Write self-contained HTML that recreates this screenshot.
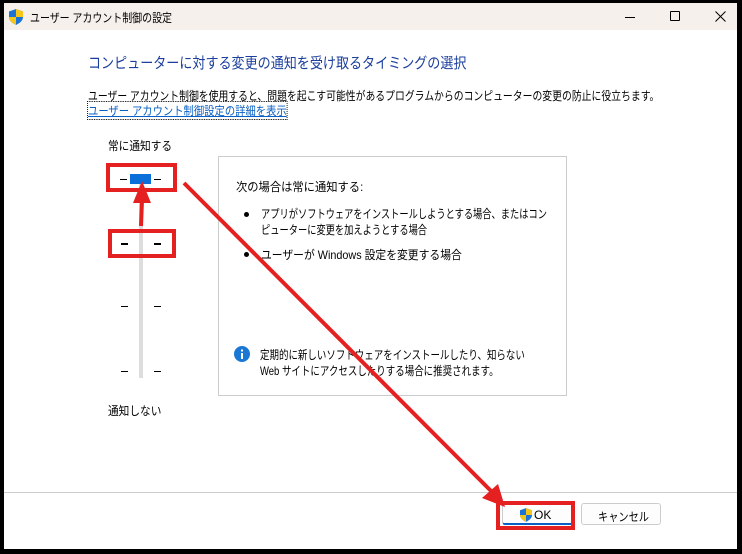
<!DOCTYPE html>
<html><head><meta charset="utf-8"><style>
*{margin:0;padding:0;box-sizing:border-box}
body{width:742px;height:554px;background:#000;position:relative;overflow:hidden;font-family:"Liberation Sans","Noto Sans CJK JP",sans-serif;color:#000}
.win{position:absolute;left:4px;top:3px;width:733px;height:546px;background:#fff;overflow:hidden}
.tb{position:absolute;left:0;top:0;width:733px;height:27px;background:#f5f0ec}
.t{position:absolute;font-size:12px;white-space:nowrap;transform-origin:0 0}
.tick{position:absolute;height:1px;width:7px;background:#000}
.tick.b{height:2px}
</style></head><body>
<div class="win">
<div class="tb">
<svg style="position:absolute;left:5px;top:6px" width="14" height="16" viewBox="0 0 14 16"><path d="M7 0L14 2.5V8C14 12 10 14.5 7 16C4 14.5 0 12 0 8V2.5Z" fill="#1a73d9"/><path d="M7 0V8H14V2.5Z" fill="#f5c518"/><path d="M0 8H7V16C4 14.5 0 12 0 8Z" fill="#f5c518"/></svg>
<div class="t" style="left:26px;top:6px;transform:scaleX(0.83)">ユーザー アカウント制御の設定</div>
<div style="position:absolute;left:621px;top:14px;width:10px;height:1px;background:#000"></div>
<div style="position:absolute;left:666px;top:8px;width:10px;height:10px;border:1px solid #000;border-radius:1px"></div>
<svg style="position:absolute;left:711px;top:8px" width="11" height="11"><path d="M0.5 0.5L10.5 10.5M10.5 0.5L0.5 10.5" stroke="#000" stroke-width="1"/></svg>
</div>
<div class="t" style="left:84px;top:49px;font-size:15px;color:#1b3e9c;transform:scaleX(0.87)">コンピューターに対する変更の通知を受け取るタイミングの選択</div>
<div class="t" style="left:84px;top:84px;transform:scaleX(0.82)">ユーザー アカウント制御を使用すると、問題を起こす可能性があるプログラムからのコンピューターの変更の防止に役立ちます。</div>
<div class="t" style="left:84px;top:99px;color:#0a5fc4;text-decoration:underline;outline:1px dotted #000;transform:scaleX(0.86)">ユーザー アカウント制御設定の詳細を表示</div>
<div class="t" style="left:104px;top:134px;transform:scaleX(0.89)">常に通知する</div>
<div class="t" style="left:104px;top:399px;transform:scaleX(0.89)">通知しない</div>
<div style="position:absolute;left:135px;top:180px;width:4px;height:195px;background:#ddd"></div>
<div style="position:absolute;left:126px;top:171px;width:21px;height:10px;background:#0a6fd8"></div>
<div class="tick" style="left:116px;top:176px"></div><div class="tick" style="left:150px;top:176px"></div>
<div class="tick b" style="left:117px;top:240px"></div><div class="tick b" style="left:150px;top:240px"></div>
<div class="tick" style="left:117px;top:303px"></div><div class="tick" style="left:150px;top:303px"></div>
<div class="tick" style="left:117px;top:368px"></div><div class="tick" style="left:150px;top:368px"></div>
<div style="position:absolute;left:214px;top:153px;width:349px;height:240px;border:1px solid #ccc"></div>
<div class="t" style="left:232px;top:175px;transform:scaleX(0.94)">次の場合は常に通知する:</div>
<div style="position:absolute;left:240px;top:209px;width:5px;height:5px;border-radius:50%;background:#000"></div>
<div class="t" style="left:257px;top:203px;line-height:16px;transform:scaleX(0.77)">アプリがソフトウェアをインストールしようとする場合、またはコン<br>ピューターに変更を加えようとする場合</div>
<div style="position:absolute;left:240px;top:249px;width:5px;height:5px;border-radius:50%;background:#000"></div>
<div class="t" style="left:257px;top:243px;transform:scaleX(0.9)">ユーザーが Windows 設定を変更する場合</div>
<svg style="position:absolute;left:230px;top:343px" width="16" height="16"><circle cx="8" cy="8" r="8" fill="#1a78d4"/><rect x="7" y="7" width="2" height="6" fill="#fff"/><rect x="7" y="3.5" width="2" height="2" fill="#fff"/></svg>
<div class="t" style="left:256px;top:344px;line-height:16px;transform:scaleX(0.79)">定期的に新しいソフトウェアをインストールしたり、知らない<br>Web サイトにアクセスしたりする場合に推奨されます。</div>
<div style="position:absolute;left:0;top:489px;width:733px;height:1px;background:#ccc"></div>
<div style="position:absolute;left:498px;top:500px;width:72px;height:22px;border:1px solid #ccc;border-bottom:2px solid #0a5fc4;border-radius:3px;background:#fdfdfd"></div>
<svg style="position:absolute;left:516px;top:505px" width="12" height="14" viewBox="0 0 14 16"><path d="M7 0L14 2.5V8C14 12 10 14.5 7 16C4 14.5 0 12 0 8V2.5Z" fill="#1a73d9"/><path d="M7 0V8H14V2.5Z" fill="#f5c518"/><path d="M0 8H7V16C4 14.5 0 12 0 8Z" fill="#f5c518"/></svg>
<div class="t" style="left:530px;top:505px">OK</div>
<div style="position:absolute;left:577px;top:500px;width:80px;height:22px;border:1px solid #ccc;border-radius:3px;background:#fdfdfd"></div>
<div class="t" style="left:594px;top:505px;transform:scaleX(0.85)">キャンセル</div>
</div>
<svg style="position:absolute;left:0;top:0" width="742" height="554">
<g fill="none" stroke="#e52020" stroke-width="4">
<rect x="108" y="165" width="67" height="25"/>
<rect x="110" y="231" width="64" height="25"/>
<rect x="498" y="503" width="75" height="25"/>
<line x1="184" y1="183" x2="495" y2="495"/>
<line x1="141" y1="226" x2="142" y2="200"/>
</g>
<polygon points="505,507 482,498 498,484" fill="#e52020"/>
<polygon points="142,181 133,203 151,203" fill="#e52020"/>
</svg>
</body></html>
